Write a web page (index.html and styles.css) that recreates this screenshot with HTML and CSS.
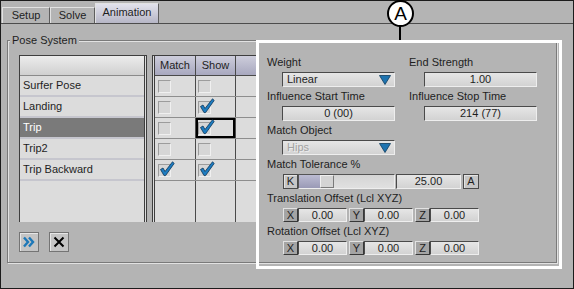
FILE: index.html
```html
<!DOCTYPE html>
<html lang="en">
<head>
    <meta charset="UTF-8">
    <meta name="viewport" content="width=device-width, initial-scale=1.0">
    <title>Pose System</title>
    <link rel="stylesheet" href="styles.css">
</head>
<body>
<div class="window">
    <div class="tabs">
        <div class="tab tab-setup">Setup</div>
        <div class="tab tab-solve">Solve</div>
        <div class="tab tab-active">Animation</div>
    </div>

    <div class="content">
        <div class="group">
            <span class="group-title">Pose System</span>

            <div class="left">
                <div class="tables">
                    <div class="list">
                        <div class="list-head"></div>
                        <div class="list-row">Surfer Pose</div>
                        <div class="list-row">Landing</div>
                        <div class="list-row selected">Trip</div>
                        <div class="list-row">Trip2</div>
                        <div class="list-row">Trip Backward</div>
                    </div>

                    <div class="grid">
                        <div class="grid-row grid-head">
                            <div class="cell c1">Match</div>
                            <div class="cell c2">Show</div>
                            <div class="cell c3"></div>
                        </div>
                        <div class="grid-row">
                            <div class="cell c1"><span class="box"></span></div>
                            <div class="cell c2"><span class="box"></span></div>
                            <div class="cell c3"></div>
                        </div>
                        <div class="grid-row">
                            <div class="cell c1"><span class="box"></span></div>
                            <div class="cell c2"><span class="box"><svg class="check" viewBox="0 0 16 16"><path d="M1.5 8.5 L4 7 L6 10.5 L13.5 0.8 L15.2 2.4 L6.6 14.6 L5 14.6 Z"/></svg></span></div>
                            <div class="cell c3"></div>
                        </div>
                        <div class="grid-row">
                            <div class="cell c1"><span class="box"></span></div>
                            <div class="cell c2 focus"><span class="box"><svg class="check" viewBox="0 0 16 16"><path d="M1.5 8.5 L4 7 L6 10.5 L13.5 0.8 L15.2 2.4 L6.6 14.6 L5 14.6 Z"/></svg></span></div>
                            <div class="cell c3"></div>
                        </div>
                        <div class="grid-row">
                            <div class="cell c1"><span class="box"></span></div>
                            <div class="cell c2"><span class="box"></span></div>
                            <div class="cell c3"></div>
                        </div>
                        <div class="grid-row">
                            <div class="cell c1"><span class="box"><svg class="check" viewBox="0 0 16 16"><path d="M1.5 8.5 L4 7 L6 10.5 L13.5 0.8 L15.2 2.4 L6.6 14.6 L5 14.6 Z"/></svg></span></div>
                            <div class="cell c2"><span class="box"><svg class="check" viewBox="0 0 16 16"><path d="M1.5 8.5 L4 7 L6 10.5 L13.5 0.8 L15.2 2.4 L6.6 14.6 L5 14.6 Z"/></svg></span></div>
                            <div class="cell c3"></div>
                        </div>
                        <div class="grid-fill">
                            <div class="cell c1"></div>
                            <div class="cell c2"></div>
                            <div class="cell c3"></div>
                        </div>
                    </div>
                </div>

                <div class="actions">
                    <button class="tool" title="Add">
                        <svg width="16" height="16" viewBox="0 0 16 16"><path d="M3 3.5 L7 8 L3 12.5 M8 3.5 L12 8 L8 12.5" fill="none" stroke="#1d78b8" stroke-width="2.4"/></svg>
                    </button>
                    <button class="tool" title="Delete">
                        <svg width="16" height="16" viewBox="0 0 16 16"><path d="M3.5 3.5 L12.5 12.5 M12.5 3.5 L3.5 12.5" fill="none" stroke="#000" stroke-width="2"/></svg>
                    </button>
                </div>
            </div>

            <div class="props">
                <div class="pair">
                    <div class="sec">
                        <div class="lbl">Weight</div>
                        <div class="combo ind">Linear<svg class="arrow" viewBox="0 0 12 10"><polygon points="0.5,0.5 11.5,0.5 6,9.5"/></svg></div>
                    </div>
                    <div class="sec">
                        <div class="lbl">End Strength</div>
                        <div class="field ind">1.00</div>
                    </div>
                    <div class="sec">
                        <div class="lbl">Influence Start Time</div>
                        <div class="field ind">0 (00)</div>
                    </div>
                    <div class="sec">
                        <div class="lbl">Influence Stop Time</div>
                        <div class="field ind">214 (77)</div>
                    </div>
                </div>

                <div class="sec">
                    <div class="lbl">Match Object</div>
                    <div class="combo ind disabled">Hips<svg class="arrow" viewBox="0 0 12 10"><polygon points="0.5,0.5 11.5,0.5 6,9.5"/></svg></div>
                </div>

                <div class="sec">
                    <div class="lbl">Match Tolerance %</div>
                    <div class="row">
                        <span class="kbtn">K</span>
                        <div class="slider"><span class="slider-fill"></span><span class="slider-thumb"></span></div>
                        <div class="field value">25.00</div>
                        <span class="kbtn abtn">A</span>
                    </div>
                </div>

                <div class="sec">
                    <div class="lbl">Translation Offset (Lcl XYZ)</div>
                    <div class="row">
                        <span class="axis">X</span><div class="field num">0.00</div>
                        <span class="axis">Y</span><div class="field num">0.00</div>
                        <span class="axis">Z</span><div class="field num">0.00</div>
                    </div>
                </div>

                <div class="sec">
                    <div class="lbl">Rotation Offset (Lcl XYZ)</div>
                    <div class="row">
                        <span class="axis">X</span><div class="field num">0.00</div>
                        <span class="axis">Y</span><div class="field num">0.00</div>
                        <span class="axis">Z</span><div class="field num">0.00</div>
                    </div>
                </div>
            </div>
        </div>
    </div>
</div>

<!-- callout overlay -->
<div class="callout-box"></div>
<div class="callout-lead"></div>
<div class="callout-badge">A</div>
</body>
</html>
```

FILE: styles.css
```css
body {
    margin: 0;
    font-family: "Liberation Sans", Arial, sans-serif;
    font-size: 11px;
    color: #1e1e1e;
    background: #b4b4b4;
}

.window {
    width: 574px;
    height: 289px;
    box-sizing: border-box;
    border: 1px solid #1c1c1c;
    background: #b4b4b4;
    overflow: hidden;
}

/* tabs */
.tabs {
    display: flex;
    align-items: flex-end;
    height: 22px;
    padding-left: 1px;
    border-bottom: 1px solid #4c4c4c;
}

.tab {
    height: 16px;
    line-height: 15px;
    box-sizing: border-box;
    text-align: center;
    border: 1px solid;
    border-color: #e2e2e2 #5e5e5e transparent #e2e2e2;
    border-bottom: 0;
}

.tab-setup { width: 48px; }
.tab-solve { width: 45px; }

.tab-active {
    width: 64px;
    height: 20px;
    line-height: 16px;
    background: linear-gradient(#e2e2ec, #b6b6c6);
}

.content {
    padding: 16px 0 0 6px;
}

/* group box */
.group {
    position: relative;
    display: flex;
    width: 550px;
    height: 223px;
    box-sizing: border-box;
    border: 1px solid #7a7a7a;
    box-shadow: inset 1px 1px 0 #e2e2e2, 1px 1px 0 #e2e2e2;
}

.group-title {
    position: absolute;
    left: 2px;
    top: -8px;
    padding: 0 2px;
    line-height: 14px;
    background: #b4b4b4;
}

.left {
    flex: none;
    width: 250px;
    box-sizing: border-box;
    padding: 14px 0 0 11px;
    overflow: hidden;
}

.tables {
    display: flex;
    height: 167px;
}

.list {
    flex: none;
    width: 128px;
    box-sizing: border-box;
    border-left: 1px solid #3e3e3e;
    border-top: 1px solid #3e3e3e;
    border-right: 3px double #3e3e3e;
    background: #dcdcdc;
}

.list-head {
    height: 19px;
    border-bottom: 1px solid #8a8a8a;
    background: linear-gradient(#ececec, #d0d0d0);
}

.list-row {
    height: 19px;
    line-height: 19px;
    padding-left: 3px;
    border-bottom: 2px solid #c6c6ce;
}

.list-row.selected {
    background: #7a7a7a;
    color: #fff;
}

.grid {
    flex: none;
    display: flex;
    flex-direction: column;
    width: 112px;
    margin-left: 5px;
    border-left: 3px double #3e3e3e;
    border-top: 1px solid #3e3e3e;
    background: #dcdcdc;
}

.grid-row {
    display: flex;
    height: 21px;
    box-sizing: border-box;
    border-bottom: 1px solid #8e8e8e;
}

.grid-head {
    height: 20px;
    border-bottom-color: #4a4a4a;
    background: linear-gradient(#cdcddb, #a8a8bf);
}

.grid-head .cell {
    padding: 0;
    line-height: 19px;
    text-align: center;
}

.grid-fill {
    flex: 1;
    display: flex;
}

.cell {
    box-sizing: border-box;
    border-right: 1px solid #4a4a4a;
    padding-top: 4px;
}

.c1 { width: 41px; padding-left: 3px; }
.c2 { width: 40px; padding-left: 2px; }
.c3 { flex: 1; border-right: 0; }

.cell.focus {
    box-shadow: inset 0 0 0 2px #000;
}

.box {
    position: relative;
    display: block;
    width: 13px;
    height: 13px;
    box-sizing: border-box;
    border: 1px solid;
    border-color: #9c9c9c #f0f0f0 #f0f0f0 #9c9c9c;
    background: #d6d6d6;
}

.check {
    position: absolute;
    left: 0;
    top: -4px;
    width: 16px;
    height: 16px;
    overflow: visible;
}

.check path {
    fill: #1d7cc0;
    stroke: #0d3558;
    stroke-width: 0.8;
}

.actions {
    display: flex;
    gap: 10px;
    margin-top: 10px;
}

.tool {
    display: flex;
    align-items: center;
    justify-content: center;
    width: 20px;
    height: 20px;
    padding: 0;
    border: 1px solid #747474;
    background: #c4c4c4;
    box-shadow: inset 1px 1px 0 #e6e6e6;
}

/* properties */
.props {
    flex: 1;
    padding: 14px 0 0 9px;
}

.pair {
    display: grid;
    grid-template-columns: 142px 130px;
}

.sec {
    margin-bottom: 2px;
}

.lbl {
    height: 14px;
    line-height: 14px;
    margin-bottom: 3px;
    white-space: nowrap;
}

.ind {
    margin-left: 15px;
    width: 113px;
}

.field,
.combo {
    height: 15px;
    box-sizing: border-box;
    border: 1px solid;
    border-color: #4a4a4a #eeeeee #eeeeee #4a4a4a;
    background: linear-gradient(#e6e6e6, #d2d2d2);
    line-height: 13px;
}

.field {
    text-align: center;
}

.combo {
    display: flex;
    align-items: center;
    justify-content: space-between;
    padding: 0 3px 0 4px;
}

.combo.disabled {
    color: #a2a2a2;
    text-shadow: 1px 1px 0 #eeeeee;
}

.arrow {
    width: 12px;
    height: 10px;
}

.arrow polygon {
    fill: #1f74b0;
    stroke: #0d3a5c;
    stroke-width: 0.8;
}

.row {
    display: flex;
    align-items: center;
    margin-left: 16px;
}

.kbtn {
    width: 15px;
    height: 15px;
    box-sizing: border-box;
    border: 1px solid #4a4a4a;
    background: #c6c6c6;
    box-shadow: inset 1px 1px 0 #e4e4e4;
    text-align: center;
    line-height: 13px;
}

.abtn {
    width: 16px;
    margin-left: 2px;
}

.slider {
    display: flex;
    width: 97px;
    height: 15px;
    box-sizing: border-box;
    border: 1px solid;
    border-color: #555 #eeeeee #eeeeee #555;
    background: linear-gradient(#d4d4d4, #e0e0e0);
}

.slider-fill {
    width: 21px;
    background: linear-gradient(#bcbcd2, #9a9ab6);
}

.slider-thumb {
    width: 14px;
    box-sizing: border-box;
    border: 1px solid;
    border-color: #efefef #7a7a7a #7a7a7a #efefef;
    background: #d4d4d4;
}

.value {
    width: 65px;
    margin-left: 1px;
}

.axis {
    width: 15px;
    height: 14px;
    box-sizing: border-box;
    border: 1px solid;
    border-color: #e2e2e2 #383838 #383838 #e2e2e2;
    background: #a4a4a4;
    text-align: center;
    line-height: 12px;
}

.axis + .field {
    width: 49px;
    height: 14px;
    line-height: 12px;
}

.field + .axis {
    margin-left: 2px;
}

/* callout drawn over the screenshot */
.callout-box {
    position: absolute;
    left: 256px;
    top: 40px;
    width: 306px;
    height: 229px;
    box-sizing: border-box;
    border: 3px solid #fff;
}

.callout-lead {
    position: absolute;
    left: 399px;
    top: 26px;
    width: 2px;
    height: 14px;
    background: #000;
}

.callout-badge {
    position: absolute;
    left: 387px;
    top: 0;
    width: 27px;
    height: 27px;
    box-sizing: border-box;
    border: 2px solid #000;
    border-radius: 50%;
    background: #fff;
    color: #000;
    font-size: 19px;
    line-height: 24px;
    text-align: center;
}
```
